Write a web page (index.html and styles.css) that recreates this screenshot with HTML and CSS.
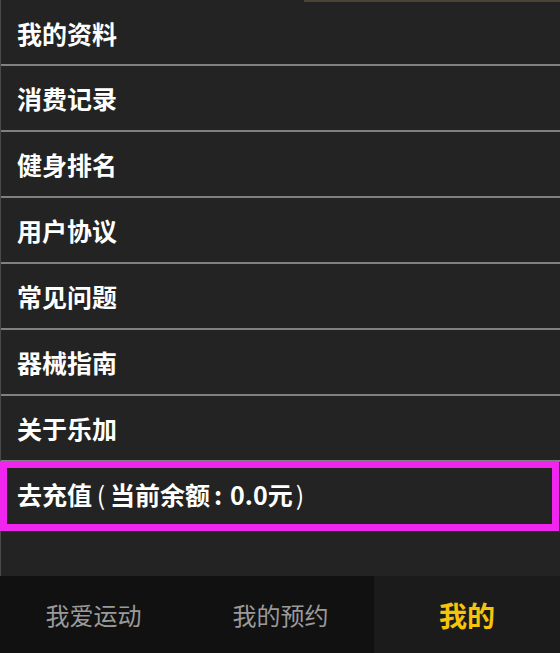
FILE: index.html
```html
<!DOCTYPE html>
<html lang="zh-CN">
<head>
<meta charset="utf-8">
<title>我的</title>
<link rel="stylesheet" href="styles.css">
</head>
<body>
<div class="app">
  <div class="content">
    <div class="top-edge"></div>
    <ul class="menu">
      <li class="menu-item first">我的资料</li>
      <li class="menu-item">消费记录</li>
      <li class="menu-item">健身排名</li>
      <li class="menu-item">用户协议</li>
      <li class="menu-item">常见问题</li>
      <li class="menu-item">器械指南</li>
      <li class="menu-item">关于乐加</li>
      <li class="menu-item recharge">去充值<span class="pc">(</span>当前余额<span class="colon">:</span>0.0元<span class="pc close">)</span></li>
    </ul>
  </div>
  <nav class="tabbar">
    <div class="tab">我爱运动</div>
    <div class="tab">我的预约</div>
    <div class="tab active">我的</div>
  </nav>
</div>
</body>
</html>
```

FILE: styles.css
```css
html, body {
  margin: 0;
  padding: 0;
  background: #222322;
}

.app {
  width: 560px;
  height: 653px;
  display: flex;
  flex-direction: column;
  font-family: "Noto Sans CJK SC", "Noto Sans", sans-serif;
}

.content {
  flex: 1;
  background: #222322;
  border-left: 1px solid #4a4a4a;
  display: flex;
  flex-direction: column;
}

.top-edge {
  height: 2px;
  background: linear-gradient(to right, transparent 303px, #4a4536 303px);
}

.menu {
  list-style: none;
  margin: 0;
  padding: 0;
}

.menu-item {
  height: 64px;
  display: flex;
  align-items: center;
  padding-left: 16px;
  border-bottom: 2px solid #808080;
  color: #ffffff;
  font-size: 25px;
  font-weight: 700;
  line-height: 1;
}

.menu-item.first {
  height: 62px;
}

.menu-item.recharge {
  position: relative;
  border-bottom: none;
}

.menu-item.recharge::after {
  content: "";
  position: absolute;
  left: -1px;
  right: 1px;
  top: -1px;
  bottom: -5px;
  border: 7px solid #f126ee;
  pointer-events: none;
}

.pc {
  display: inline-block;
  width: 18px;
  text-align: center;
  font-weight: 400;
}

.pc.close {
  text-align: left;
  padding-left: 3px;
}

.colon {
  display: inline-block;
  width: 20px;
  padding-left: 4px;
  box-sizing: border-box;
}

.tabbar {
  height: 77px;
  display: flex;
  background: #111111;
}

.tab {
  flex: 0 0 187px;
  display: flex;
  align-items: center;
  justify-content: center;
  color: #9a9a9a;
  font-size: 24px;
  font-weight: 400;
}

.tab.active {
  flex: 1;
  background: #1b1b1b;
  color: #f6c40a;
  font-size: 28px;
  font-weight: 700;
}
```
